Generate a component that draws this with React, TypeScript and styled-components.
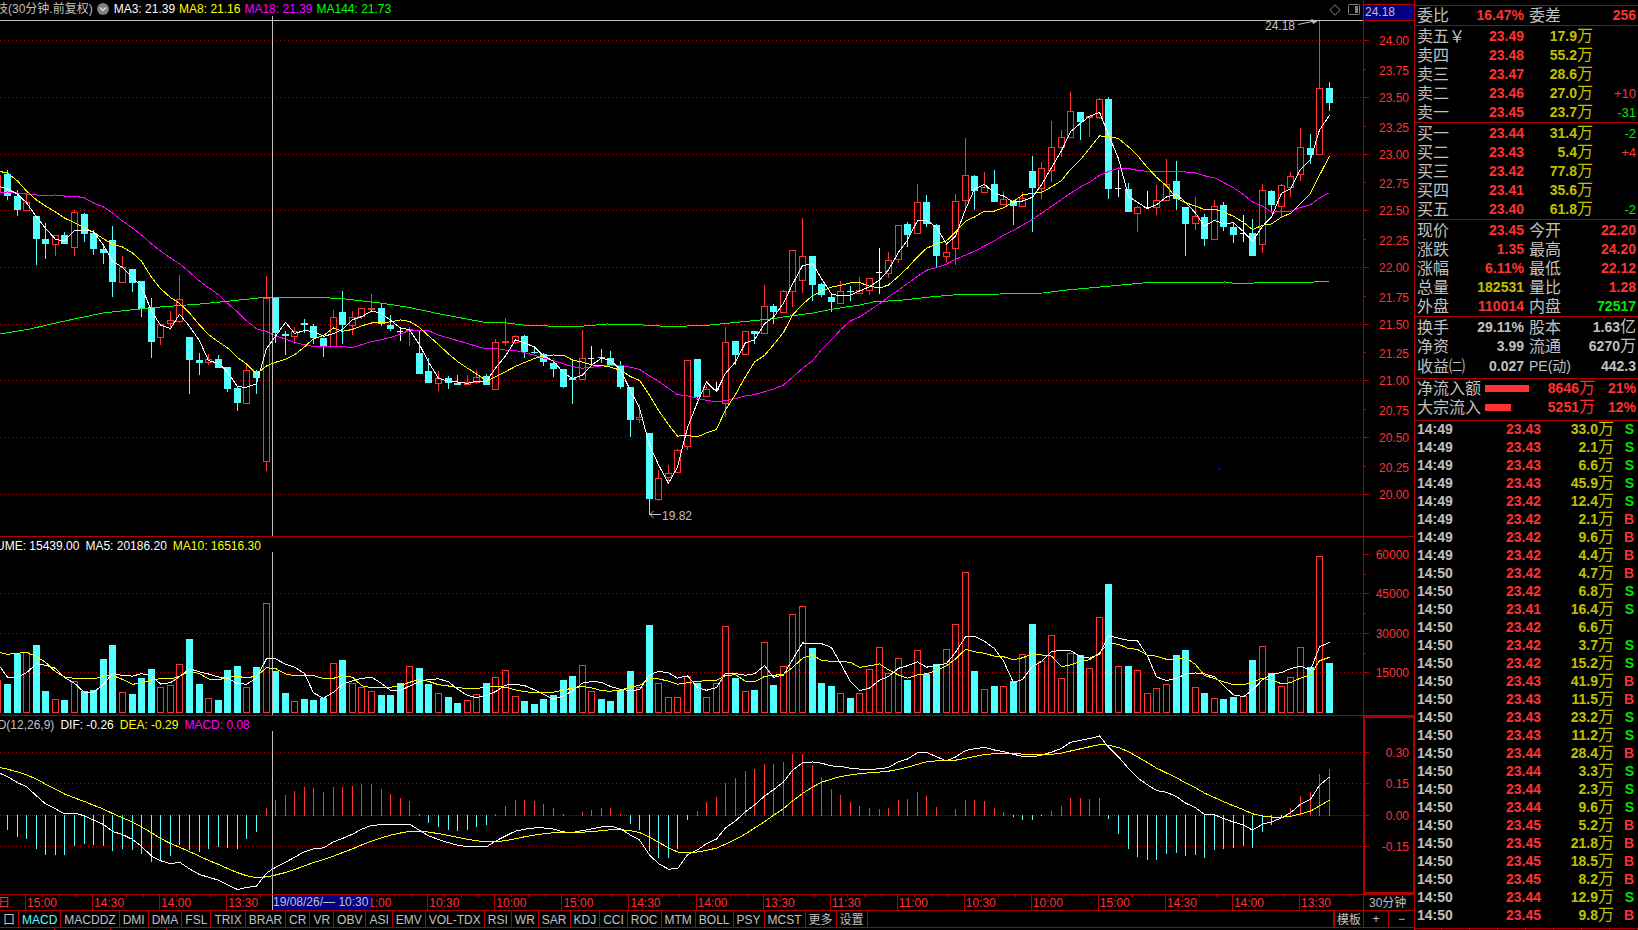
import React from 'react';
import styled, { createGlobalStyle } from 'styled-components';

const C = {
  line: '#b00000',
  red: '#ff3232',
  cyan: '#54ffff',
  grey: '#c0c0c0',
  yellow: '#ffff00',
  gold: '#c0c000',
  magenta: '#ff00ff',
  green: '#00ff00',
  lime: '#00e600',
  white: '#ffffff',
  navy: '#000080',
};

const SANS = '"Liberation Sans", "Noto Sans CJK SC", sans-serif';

const Global = createGlobalStyle`
  body { margin: 0; background: #000; color: ${C.grey}; font-family: ${SANS}; font-size: 12px; }
  * { box-sizing: border-box; }
`;

/* ---------- chart data ---------- */

type Kind = 'r' | 'c' | 'w';
/** kind, body top, body bottom, high, low */
type Candle = [Kind, number, number, number, number];

const LEAD: Candle = ['r', 175, 192, 175, 192];

const CANDLES: Candle[] = [
  ['c', 174, 196, 170, 200], ['c', 196, 210, 190, 216], ['r', 202, 211, 193, 211], ['c', 216, 239, 216, 265],
  ['c', 239, 244, 223, 259], ['r', 235, 245, 235, 256], ['c', 235, 244, 232, 244], ['r', 212, 248, 210, 256],
  ['c', 214, 234, 213, 242], ['c', 233, 249, 230, 255], ['c', 249, 253, 244, 264], ['c', 240, 282, 226, 297],
  ['r', 267, 283, 256, 283], ['c', 269, 283, 269, 292], ['c', 281, 309, 281, 317], ['c', 307, 342, 298, 358],
  ['r', 324, 338, 324, 345], ['r', 320, 324, 311, 330], ['r', 299, 322, 275, 323], ['c', 337, 360, 337, 394],
  ['c', 360, 363, 353, 375], ['r', 359, 363, 354, 365], ['c', 359, 368, 355, 368], ['c', 367, 389, 367, 392],
  ['c', 388, 403, 386, 411], ['r', 370, 404, 365, 404], ['c', 371, 378, 370, 394], ['r', 298, 462, 276, 471],
  ['c', 298, 333, 298, 343], ['c', 334, 336, 331, 355], ['r', 331, 337, 327, 344], ['c', 323, 325, 319, 333],
  ['c', 326, 338, 324, 344], ['c', 338, 346, 338, 357], ['r', 317, 347, 310, 347], ['c', 312, 325, 291, 344],
  ['r', 317, 326, 311, 335], ['r', 308, 317, 308, 319], ['r', 308, 310, 294, 311], ['c', 308, 324, 304, 326],
  ['c', 325, 329, 315, 331], ['w', 331, 332, 328, 341], ['r', 329, 331, 327, 346], ['c', 353, 374, 331, 374],
  ['c', 371, 383, 358, 383], ['r', 378, 384, 371, 391], ['c', 378, 383, 376, 389], ['c', 383, 385, 375, 385],
  ['r', 382, 385, 375, 385], ['r', 377, 383, 370, 384], ['c', 376, 385, 374, 385], ['r', 342, 390, 339, 390],
  ['r', 341, 343, 318, 346], ['r', 336, 343, 335, 344], ['c', 336, 352, 335, 358], ['c', 352, 353, 348, 354],
  ['c', 354, 362, 353, 366], ['c', 363, 369, 360, 377], ['c', 369, 387, 369, 388], ['c', 378, 380, 360, 404],
  ['r', 358, 380, 330, 380], ['w', 358, 359, 346, 366], ['c', 357, 358, 349, 363], ['c', 358, 365, 351, 365],
  ['c', 365, 387, 361, 389], ['c', 387, 420, 387, 437], ['r', 417, 420, 404, 423], ['c', 433, 499, 433, 515],
  ['r', 478, 500, 470, 501], ['r', 473, 478, 465, 481], ['r', 450, 473, 449, 473], ['r', 360, 447, 360, 450],
  ['c', 359, 397, 359, 400], ['r', 389, 397, 385, 397], ['w', 389, 390, 382, 392], ['r', 342, 404, 327, 417],
  ['c', 341, 355, 341, 365], ['r', 331, 355, 331, 355], ['c', 331, 334, 331, 344], ['r', 306, 334, 285, 334],
  ['c', 306, 312, 304, 324], ['r', 291, 313, 290, 313], ['r', 250, 292, 250, 307], ['r', 256, 281, 218, 293],
  ['c', 256, 285, 256, 301], ['c', 284, 295, 283, 297], ['c', 297, 302, 295, 312], ['r', 291, 304, 281, 304],
  ['c', 291, 292, 286, 301], ['r', 290, 294, 277, 294], ['r', 278, 291, 278, 295], ['w', 272, 273, 248, 294],
  ['r', 260, 274, 252, 278], ['r', 225, 260, 225, 263], ['c', 224, 235, 222, 247], ['r', 202, 234, 184, 234],
  ['c', 202, 224, 195, 227], ['c', 225, 256, 224, 268], ['r', 252, 257, 245, 263], ['r', 201, 249, 194, 265],
  ['r', 175, 201, 138, 210], ['c', 176, 191, 175, 210], ['r', 187, 193, 172, 193], ['c', 184, 202, 170, 202],
  ['r', 199, 205, 191, 205], ['c', 201, 206, 200, 225], ['r', 198, 207, 192, 207], ['c', 171, 188, 156, 232],
  ['r', 168, 189, 162, 199], ['r', 147, 171, 121, 182], ['r', 137, 148, 130, 157], ['r', 111, 138, 92, 138],
  ['c', 112, 122, 112, 140], ['r', 116, 118, 116, 137], ['r', 99, 118, 98, 119], ['c', 99, 189, 97, 199],
  ['w', 188, 189, 170, 197], ['c', 189, 212, 183, 212], ['r', 207, 214, 206, 232], ['w', 207, 208, 191, 209],
  ['r', 200, 208, 185, 215], ['r', 184, 201, 159, 201], ['c', 181, 199, 161, 210], ['c', 207, 224, 207, 256],
  ['r', 216, 224, 197, 230], ['c', 217, 239, 214, 246], ['r', 206, 240, 200, 240], ['c', 205, 227, 202, 231],
  ['c', 227, 235, 222, 243], ['w', 233, 234, 215, 242], ['c', 233, 256, 219, 256], ['r', 190, 245, 184, 253],
  ['c', 191, 205, 190, 212], ['r', 185, 207, 184, 217], ['r', 176, 188, 172, 197], ['r', 147, 175, 128, 181],
  ['c', 148, 155, 134, 164], ['r', 88, 155, 21, 155], ['c', 88, 103, 82, 111],
];

/* Volume and MACD levels are kept in thirds of a pixel below y = 530. */
const third = (v: number) => 530 + v / 3;

const VOLUMES = [
  462, 371, 367, 345, 483, 508, 510, 454, 483, 480, 387, 345, 487, 492, 444, 417, 471, 465, 402, 327,
  462, 504, 510, 420, 408, 471, 411, 219, 423, 489, 514, 507, 510, 504, 400, 390, 460, 472, 484, 495,
  495, 459, 409, 414, 462, 490, 501, 519, 511, 493, 459, 442, 421, 499, 513, 522, 507, 495, 450, 438,
  406, 484, 507, 513, 480, 423, 472, 285, 460, 502, 502, 439, 459, 502, 460, 289, 444, 484, 480, 337,
  465, 409, 253, 229, 354, 459, 468, 490, 504, 490, 418, 352, 430, 385, 450, 361, 432, 402, 358, 283,
  127, 423, 478, 468, 469, 454, 373, 282, 394, 316, 445, 370, 375, 415, 262, 162, 409, 408, 421, 490,
  475, 463, 375, 360, 472, 489, 505, 507, 501, 499, 390, 349, 430, 469, 442, 352, 411, 79, 399,
];

const ZERO = 856;
const MACD = [
  900, 921, 927, 957, 975, 975, 975, 948, 942, 945, 948, 963, 957, 960, 972, 996, 990, 978, 945, 960,
  966, 957, 951, 954, 957, 927, 906, 834, 810, 795, 783, 771, 774, 786, 771, 771, 768, 762, 762, 777,
  792, 804, 813, 852, 879, 891, 900, 903, 900, 891, 885, 852, 828, 810, 810, 813, 822, 834, 852, 856,
  846, 840, 834, 834, 852, 882, 900, 963, 984, 984, 957, 870, 843, 816, 801, 759, 744, 723, 717, 702,
  702, 696, 672, 672, 705, 741, 777, 795, 816, 828, 834, 837, 834, 810, 807, 786, 798, 831, 856, 837,
  810, 810, 813, 834, 846, 861, 870, 870, 858, 843, 828, 804, 804, 807, 804, 867, 912, 957, 981, 990,
  990, 972, 969, 978, 975, 984, 960, 957, 954, 948, 954, 906, 885, 860, 834, 798, 786, 732, 717,
];

const STEP = 9.578;
const column = (i: number) => Math.floor(7.5 + STEP * i);

const CLOSES = CANDLES.map(([kind, top, bottom]) => (kind === 'c' ? bottom : top));

/** Moving average; `lead` holds the values from bar -1 up to the first full window. */
function average(values: number[], period: number, lead: number[]): [number, number][] {
  const out: [number, number][] = lead.map((v, k) => [k - 1, v]);
  for (let i = period - 1; i < values.length; i += 1) {
    let sum = 0;
    for (let k = 0; k < period; k += 1) sum += values[i - k];
    out.push([i, sum / period]);
  }
  return out;
}

const path = (pts: [number, number][], y: (v: number) => number = (v) => v) =>
  pts.map(([i, v]) => `${column(i) + 0.5},${y(v).toFixed(1)}`).join(' ');

const MA3 = average(CLOSES, 3, [186, 189, 194]);
const MA8 = average(CLOSES, 8, [171, 173, 181, 191, 200, 206, 212, 218]);
const MA18 = average(CLOSES, 18, [
  193, 192, 193, 194, 195, 196, 195, 196, 196, 198, 203, 207, 213, 221, 228, 235, 244, 251,
]);
const MA144 =
  '0,334 30,329 60,322 103,313 130,310 160,307 200,304 230,301 258,298 285,297 315,297 345,299 380,303 407,307 440,314 483,322 507,323 523,325 573,327 607,324 643,325 660,326 687,326 710,325 740,322 770,319 790,316 813,313 833,309 860,305 873,302 903,300 930,297 953,295 1000,294 1043,293 1067,290 1100,287 1143,283 1225,282 1232,283 1254,283 1260,282 1314,282 1329,281';
const VMA5 = average(VOLUMES, 5, [400, 442, 442, 428, 401]);
const VMA10 = average(VOLUMES, 10, [366, 373, 370, 367, 380, 397, 425, 441, 445, 446]);

const DEA: [number, number][] = [[-1, 711]];
const DIF: [number, number][] = [[-1, 727]];
MACD.forEach((v, i) => {
  const dea = (i === 0 ? 712 : DEA[i][1]) + (v - ZERO) / 8 + 0.05;
  DEA.push([i, dea]);
  DIF.push([i, dea + (v - ZERO) / 2]);
});

/* ---------- chart parts ---------- */

const Screen = styled.div`
  display: flex;
  min-height: 100vh;
  overflow: hidden;
  background: #000;
`;

const Charts = styled.main`
  flex: 1;
  min-width: 0;
  display: flex;
  flex-direction: column;
`;

const Panel = styled.section`
  display: grid;
  grid-template-columns: minmax(0, 1fr) 51px;
  border-bottom: 1px solid ${C.line};
`;

const Plot = styled.div`
  min-width: 0;
  overflow: hidden;
`;

const Legend = styled.header<{ $height: number; $gap: number }>`
  display: flex;
  align-items: center;
  gap: ${(p) => p.$gap}px;
  height: ${(p) => p.$height}px;
  padding-top: 2px;
  line-height: 14px;
  white-space: nowrap;
`;

const Clipped = styled.span<{ $cut: number; $color?: string }>`
  margin-left: -${(p) => p.$cut}px;
  color: ${(p) => p.$color ?? C.grey};
`;

const Value = styled.span<{ $color: string }>`
  color: ${(p) => p.$color};
`;

const IconButton = styled.button`
  display: flex;
  padding: 0;
  border: 0;
  background: none;
  cursor: pointer;
`;

const MenuButton = styled(IconButton)`
  margin-right: 1px;
`;

const Tools = styled.div`
  display: flex;
  align-items: center;
  gap: 7px;
  margin: 2px 3px 0 auto;
`;

const Canvas = styled.svg<{ $height: number }>`
  display: block;
  width: 100%;
  height: ${(p) => p.$height}px;
`;

const AxisCanvas = styled.svg<{ $height: number }>`
  display: block;
  width: 51px;
  height: ${(p) => p.$height}px;
`;

const Curve = ({ points, color }: { points: string; color: string }) => (
  <polyline points={points} fill="none" stroke={color} strokeWidth={1} shapeRendering="crispEdges" />
);

const Grid = ({ rows, dash = '1 3' }: { rows: number[]; dash?: string }) => (
  <g stroke={C.line} strokeDasharray={dash} shapeRendering="crispEdges">
    {rows.map((y) => (
      <line key={y} x1={0} x2={1363} y1={y + 0.5} y2={y + 0.5} />
    ))}
  </g>
);

const Stick = ({ i, data }: { i: number; data: Candle }) => {
  const [kind, top, bottom, high, low] = data;
  const x = column(i);
  if (kind === 'r') {
    return (
      <g fill="none" stroke={C.red}>
        <path d={`M${x + 0.5} ${high}V${top}M${x + 0.5} ${bottom}V${low}`} />
        <rect x={x - 2.5} y={top + 0.5} width={6} height={Math.max(1, bottom - top - 1)} />
      </g>
    );
  }
  const color = kind === 'c' ? C.cyan : C.white;
  return (
    <g fill={color}>
      <rect x={x} y={high} width={1} height={low - high} />
      <rect x={x - 3} y={top} width={kind === 'c' ? 7 : 6} height={Math.max(1, bottom - top)} />
    </g>
  );
};

const VolumeBar = ({ i, top, down }: { i: number; top: number; down: boolean }) => {
  const x = column(i);
  const y = Math.round(third(top));
  return down ? (
    <rect x={x - 3} y={y} width={7} height={713 - y} fill={C.cyan} />
  ) : (
    <rect x={x - 2.5} y={y + 0.5} width={6} height={712 - y} fill="none" stroke={C.red} />
  );
};

const Crosshair = ({ from, to }: { from: number; to: number }) => (
  <rect x={272} y={from} width={1} height={to - from} fill={C.grey} />
);

type Mark = [number, string];

const AxisMarks = ({ ticks, minor, labels }: { ticks: number[]; minor: number[]; labels: Mark[] }) => (
  <>
    <path
      d={[...ticks.map((y) => `M1364 ${y + 0.5}h5`), ...minor.map((y) => `M1364 ${y + 0.5}h2`)].join('')}
      stroke={C.line}
      shapeRendering="crispEdges"
    />
    <g fill={C.red} fontFamily={SANS} fontSize={12} textAnchor="end">
      {labels.map(([y, text]) => (
        <text key={text} x={1409} y={y + 5}>
          {text}
        </text>
      ))}
    </g>
  </>
);

const PRICE_ROWS = [40, 97, 154, 210, 267, 324, 380, 437, 494];
const PRICE_LABELS: Mark[] = [
  [40, '24.00'], [70, '23.75'], [97, '23.50'], [127, '23.25'], [154, '23.00'], [183, '22.75'], [210, '22.50'],
  [240, '22.25'], [267, '22.00'], [297, '21.75'], [324, '21.50'], [353, '21.25'], [380, '21.00'], [410, '20.75'],
  [437, '20.50'], [467, '20.25'], [494, '20.00'],
];

const PricePanel = () => (
  <Panel>
    <Plot>
      <Legend $height={16} $gap={4}>
        <Clipped $cut={4}>技(30分钟.前复权)</Clipped>
        <MenuButton aria-label="指标菜单">
          <svg width="12" height="12" viewBox="0 0 12 12">
            <circle cx="6" cy="6" r="6" fill="#808080" />
            <path d="M3 4.5 6 7.5 9 4.5" fill="none" stroke="#ddd" strokeWidth="1.5" />
          </svg>
        </MenuButton>
        <Value $color={C.white}>MA3: 21.39</Value>
        <Value $color={C.yellow}>MA8: 21.16</Value>
        <Value $color={C.magenta}>MA18: 21.39</Value>
        <Value $color={C.green}>MA144: 21.73</Value>
        <Tools>
          <IconButton aria-label="标记">
            <svg width="12" height="12" viewBox="0 0 12 12">
              <path d="M6 .8 11.2 6 6 11.2 .8 6Z" fill="none" stroke="#808080" />
            </svg>
          </IconButton>
          <IconButton aria-label="侧栏">
            <svg width="12" height="12" viewBox="0 0 12 12">
              <rect x=".5" y=".5" width="11" height="10" rx="1" fill="none" stroke="#808080" />
              <rect x="7" y="2" width="3" height="7" fill="#808080" />
            </svg>
          </IconButton>
        </Tools>
      </Legend>
      <Canvas $height={520} viewBox="0 16 1363 520" preserveAspectRatio="xMaxYMin slice">
        <Grid rows={PRICE_ROWS} />
        <g shapeRendering="crispEdges">
          {[LEAD, ...CANDLES].map((data, k) => (
            <Stick key={k} i={k - 1} data={data} />
          ))}
        </g>
        <Curve points={MA144} color={C.green} />
        <Curve points={path(MA18)} color={C.magenta} />
        <Curve points={path(MA8)} color={C.yellow} />
        <Curve points={path(MA3)} color={C.white} />
        <rect x={0} y={20} width={1363} height={1} fill={C.grey} />
        <Crosshair from={16} to={536} />
        <rect x={1218} y={468} width={2} height={2} fill="#0000ff" />
        <g stroke={C.grey} fill="none">
          <path d="M650 514.5H661M653.5 511 650 514.5 653.5 518" />
          <path d="M1298 24.5 1317 20.5" />
          <path d="M1311 19 1318 21 1313 24Z" fill={C.grey} stroke="none" />
        </g>
        <g fill={C.grey} fontFamily={SANS} fontSize={12}>
          <text x={662} y={520}>19.82</text>
          <text x={1265} y={30}>24.18</text>
        </g>
      </Canvas>
    </Plot>
    <AxisCanvas $height={536} viewBox="1363 0 51 536">
      <g shapeRendering="crispEdges">
        <rect x={1364} y={5} width={50} height={15} fill={C.navy} />
        <path d="M1363.5 0V536M1364 4.5h50M1364 20.5h50" stroke={C.line} />
      </g>
      <AxisMarks
        ticks={PRICE_ROWS}
        minor={[69, 126, 182, 239, 296, 352, 409, 466]}
        labels={PRICE_LABELS}
      />
      <text x={1365} y={16} fill={C.grey} fontFamily={SANS} fontSize={12}>
        24.18
      </text>
    </AxisCanvas>
  </Panel>
);

const VolumePanel = () => (
  <Panel>
    <Plot>
      <Legend $height={15} $gap={6}>
        <Clipped $cut={28} $color={C.white}>VOLUME: 15439.00</Clipped>
        <Value $color={C.white}>MA5: 20186.20</Value>
        <Value $color={C.yellow}>MA10: 16516.30</Value>
      </Legend>
      <Canvas $height={163} viewBox="0 552 1363 163" preserveAspectRatio="xMaxYMin slice">
        <Grid rows={[593, 633, 672]} />
        <g shapeRendering="crispEdges">
          {[450, ...VOLUMES].map((top, k) => (
            <VolumeBar key={k} i={k - 1} top={top} down={k > 0 && (CANDLES[k - 1][0] === 'c' || k === 42)} />
          ))}
        </g>
        <Curve points={path(VMA5, third)} color={C.white} />
        <Curve points={path(VMA10, third)} color={C.yellow} />
        <Crosshair from={552} to={715} />
      </Canvas>
    </Plot>
    <AxisCanvas $height={178} viewBox="1363 537 51 178">
      <path d="M1363.5 537V715" stroke={C.line} shapeRendering="crispEdges" />
      <AxisMarks
        ticks={[554, 593, 633, 672]}
        minor={[574, 613, 653]}
        labels={[[554, '60000'], [593, '45000'], [633, '30000'], [672, '15000']]}
      />
    </AxisCanvas>
  </Panel>
);

const MacdPanel = () => (
  <Panel>
    <Plot>
      <Legend $height={15} $gap={6}>
        <Clipped $cut={29}>MACD(12,26,9)</Clipped>
        <Value $color={C.white}>DIF: -0.26</Value>
        <Value $color={C.yellow}>DEA: -0.29</Value>
        <Value $color={C.magenta}>MACD: 0.08</Value>
      </Legend>
      <Canvas $height={163} viewBox="0 731 1363 163" preserveAspectRatio="xMaxYMin slice">
        <Grid rows={[752, 783, 846]} />
        <Grid rows={[815]} dash="1 1" />
        <g shapeRendering="crispEdges">
          {MACD.map((v, i) => {
            const y = Math.round(third(v));
            return v === ZERO ? null : v > ZERO ? (
              <rect key={i} x={column(i)} y={815} width={1} height={Math.max(1, y - 815)} fill={C.cyan} />
            ) : (
              <rect key={i} x={column(i)} y={y} width={1} height={816 - y} fill={C.red} />
            );
          })}
        </g>
        <Curve points={path(DIF, third)} color={C.white} />
        <Curve points={path(DEA, third)} color={C.yellow} />
        <Crosshair from={731} to={894} />
      </Canvas>
    </Plot>
    <AxisCanvas $height={178} viewBox="1363 716 51 178">
      <rect x={1364} y={717} width={50} height={176} fill="none" stroke={C.line} strokeWidth={2} />
      <AxisMarks
        ticks={[752, 783, 815, 846]}
        minor={[768, 799, 831]}
        labels={[[752, '0.30'], [783, '0.15'], [815, '0.00'], [846, '-0.15']]}
      />
    </AxisCanvas>
  </Panel>
);

/* ---------- time axis and indicator tabs ---------- */

const TimeRow = styled.div`
  position: relative;
  display: grid;
  grid-template-columns: minmax(0, 1fr) 51px;
  height: 16px;
  border-bottom: 1px solid ${C.line};
  line-height: 16px;
`;

const Times = styled.div`
  display: grid;
  grid-template-columns: 25px repeat(19, minmax(0, 1fr)) 64px;
  color: ${C.red};
  line-height: 17px;
  overflow: hidden;
`;

const TimeCell = styled.span`
  position: relative;
  padding-left: 1px;
  border-left: 1px solid ${C.line};
  white-space: nowrap;
`;

const TimeStart = styled.span`
  margin-left: -2px;
`;

const Notches = styled.i`
  position: absolute;
  top: 0;
  left: 16px;
  width: 35px;
  height: 2px;
  background: repeating-linear-gradient(90deg, ${C.line} 0 1px, transparent 1px 17px);
`;

const DateFlag = styled.output`
  position: absolute;
  top: 0;
  left: 272px;
  width: 99px;
  height: 15px;
  border-left: 1px solid ${C.grey};
  background: ${C.navy};
  color: ${C.grey};
  line-height: 14px;
  white-space: nowrap;
  overflow: hidden;
`;

const Period = styled.span`
  padding-left: 5px;
  border-left: 1px solid ${C.line};
`;

const TabRow = styled.div`
  display: grid;
  grid-template-columns: minmax(0, 1fr) 51px;
  height: 17px;
  border-bottom: 1px solid ${C.line};
`;

const Tabs = styled.nav`
  display: flex;
  overflow: hidden;
`;

const Tab = styled.button<{ $active?: boolean }>`
  flex: none;
  padding: 2px 3px 0;
  border: 0;
  border-right: 1px solid ${C.line};
  background: none;
  color: ${(p) => (p.$active ? C.cyan : C.grey)};
  font: 12px/14px ${SANS};
  cursor: pointer;
`;

const Template = styled(Tab)`
  margin-left: auto;
  padding: 2px 2px 0;
  border-left: 2px solid ${C.line};
  border-right: 0;
`;

const Zoom = styled.div`
  display: grid;
  grid-template-columns: 1fr 1fr;
  border-left: 1px solid ${C.line};
`;

const ZoomButton = styled(Tab)`
  padding-top: 0;

  &:last-child {
    border-right: 0;
  }
`;

const Ruler = styled.div`
  height: 2px;
  margin-left: 54px;
  width: 113px;
  background: repeating-linear-gradient(90deg, ${C.line} 0 1px, transparent 1px 56px);
`;

/* The fifth mark carries no time: the date flag of the crosshair lies over it. */
const TIMES = [
  '15:00', '14:30', '14:00', '13:30', '', '11:00', '10:30', '10:00', '15:00', '14:30', '14:00', '13:30',
  '11:30', '11:00', '10:30', '10:00', '15:00', '14:30', '14:00', '13:30',
];

const INDICATORS = [
  '口', 'MACD', 'MACDDZ', 'DMI', 'DMA', 'FSL', 'TRIX', 'BRAR', 'CR', 'VR', 'OBV', 'ASI', 'EMV', 'VOL-TDX', 'RSI',
  'WR', 'SAR', 'KDJ', 'CCI', 'ROC', 'MTM', 'BOLL', 'PSY', 'MCST', '更多', '设置',
];

/* ---------- quote sidebar ---------- */

const Sidebar = styled.aside`
  flex: none;
  width: 224px;
  padding-top: 5px;
  border-left: 1px solid ${C.line};
`;

const Block = styled.table<{ $last?: boolean }>`
  width: 100%;
  table-layout: fixed;
  border-collapse: separate;
  border-spacing: 0;
  border-top: 1px solid ${C.line};
  border-bottom: ${(p) => (p.$last ? `1px solid ${C.line}` : '0')};
  padding: 0 2px;
`;

const Row = styled.tr<{ $height: number; $line?: number }>`
  height: ${(p) => p.$height}px;
  line-height: ${(p) => p.$line ?? p.$height}px;
`;

const Name = styled.th<{ $indent?: number }>`
  height: inherit;
  padding: 0 0 0 ${(p) => p.$indent ?? 0}px;
  font-size: 16px;
  font-weight: 400;
  line-height: inherit;
  text-align: left;
  white-space: nowrap;
`;

const Num = styled.td<{ $color: string; $light?: boolean }>`
  height: inherit;
  padding: 0;
  color: ${(p) => p.$color};
  font-size: ${(p) => (p.$light ? 13 : 14)}px;
  font-weight: ${(p) => (p.$light ? 400 : 700)};
  line-height: inherit;
  text-align: right;
  white-space: nowrap;
`;

const TapeNum = styled(Num)`
  vertical-align: top;
`;

const Time = styled(TapeNum)`
  text-align: left;
`;

const Side = styled(TapeNum)`
  padding-right: 2px;
`;

const UnitText = styled.span`
  font-size: 16px;
  font-weight: 400;
  line-height: 1px;
`;

const Latin = styled.span`
  font-size: 14px;
`;

const Gauge = styled.i`
  display: block;
  height: 7px;
  margin-left: 4px;
  background: ${C.red};
`;

const Filler = styled.tbody<{ $height: number }>`
  &::after {
    content: '';
    display: block;
    height: ${(p) => p.$height}px;
  }
`;

const SideRuler = styled.div`
  height: 2px;
  margin-left: 26px;
  background: repeating-linear-gradient(90deg, ${C.line} 0 1px, transparent 1px 28px);
`;

const Amount = ({ text }: { text: string }) => {
  const unit = /[万亿]$/.test(text) ? text.slice(-1) : '';
  return (
    <>
      {unit ? text.slice(0, -1) : text}
      {unit && <UnitText>{unit}</UnitText>}
    </>
  );
};

const Cols = ({ widths }: { widths: (number | undefined)[] }) => (
  <colgroup>
    {widths.map((w, i) => (
      <col key={i} width={w} />
    ))}
  </colgroup>
);

const ASKS = [
  ['卖五￥', '23.49', '17.9万', ''],
  ['卖四', '23.48', '55.2万', ''],
  ['卖三', '23.47', '28.6万', ''],
  ['卖二', '23.46', '27.0万', '+10'],
  ['卖一', '23.45', '23.7万', '-31'],
];

const BIDS = [
  ['买一', '23.44', '31.4万', '-2'],
  ['买二', '23.43', '5.4万', '+4'],
  ['买三', '23.42', '77.8万', ''],
  ['买四', '23.41', '35.6万', ''],
  ['买五', '23.40', '61.8万', '-2'],
];

const Orders = ({ rows }: { rows: string[][] }) => (
  <Block>
    <Cols widths={[48, 59, 69, undefined]} />
    <Filler $height={1} />
    <tbody>
      {rows.map(([name, price, amount, delta]) => (
        <Row key={name} $height={19}>
          <Name scope="row">{name}</Name>
          <Num $color={C.red}>{price}</Num>
          <Num $color={C.gold}>
            <Amount text={amount} />
          </Num>
          <Num $light $color={delta.startsWith('+') ? C.red : C.lime}>{delta}</Num>
        </Row>
      ))}
    </tbody>
  </Block>
);

type Pair = [React.ReactNode, string, string, React.ReactNode, string, string];

const Pairs = ({ rows, before = 0, after = 0 }: { rows: Pair[]; before?: number; after?: number }) => (
  <Block>
    <Cols widths={[48, 59, 54, undefined]} />
    {before > 0 && <Filler $height={before} />}
    <tbody>
      {rows.map(([a, av, ac, b, bv, bc]) => (
        <Row key={av} $height={19}>
          <Name scope="row">{a}</Name>
          <Num $color={ac}>{av}</Num>
          <Name scope="row" $indent={5}>{b}</Name>
          <Num $color={bc}>
            <Amount text={bv} />
          </Num>
        </Row>
      ))}
    </tbody>
    {after > 0 && <Filler $height={after} />}
  </Block>
);

const FLOWS: [string, number, string, string][] = [
  ['净流入额', 44, '8646万', '21%'],
  ['大宗流入', 26, '5251万', '12%'],
];

const TICKS = `14:49 23.43 33.0 S|14:49 23.43 2.1 S|14:49 23.43 6.6 S|14:49 23.43 45.9 S|14:49 23.42 12.4 S|14:49 23.42 2.1 B|14:49 23.42 9.6 B|14:49 23.42 4.4 B|14:50 23.42 4.7 B|14:50 23.42 6.8 S|14:50 23.41 16.4 S|14:50 23.42 6.6 |14:50 23.42 3.7 S|14:50 23.42 15.2 S|14:50 23.43 41.9 B|14:50 23.43 11.5 B|14:50 23.43 23.2 S|14:50 23.43 11.2 S|14:50 23.44 28.4 B|14:50 23.44 3.3 S|14:50 23.44 2.3 S|14:50 23.44 9.6 S|14:50 23.45 5.2 B|14:50 23.45 21.8 B|14:50 23.45 18.5 B|14:50 23.45 8.2 B|14:50 23.44 12.9 S|14:50 23.45 9.8 B`
  .split('|')
  .map((row) => row.split(' '));

const Quotes = () => (
  <Sidebar>
    <Pairs rows={[['委比', '16.47%', C.red, '委差', '256', C.red]]} />
    <Orders rows={ASKS} />
    <Orders rows={BIDS} />
    <Pairs
      before={1}
      rows={[
        ['现价', '23.45', C.red, '今开', '22.20', C.red],
        ['涨跌', '1.35', C.red, '最高', '24.20', C.red],
        ['涨幅', '6.11%', C.red, '最低', '22.12', C.red],
        ['总量', '182531', C.gold, '量比', '1.28', C.red],
        ['外盘', '110014', C.red, '内盘', '72517', C.lime],
      ]}
    />
    <Pairs
      before={1}
      after={2}
      rows={[
        ['换手', '29.11%', C.grey, '股本', '1.63亿', C.grey],
        ['净资', '3.99', C.grey, '流通', '6270万', C.grey],
        ['收益㈡', '0.027', C.grey, <Latin>PE(动)</Latin>, '442.3', C.grey],
      ]}
    />
    <Block>
      <Cols widths={[64, 50, 64, undefined]} />
      <tbody>
        {FLOWS.map(([name, width, amount, share]) => (
          <Row key={name} $height={19}>
            <Name scope="row">{name}</Name>
            <Num $color={C.red}>
              <Gauge style={{ width }} />
            </Num>
            <Num $color={C.red}>
              <Amount text={amount} />
            </Num>
            <Num $color={C.red}>{share}</Num>
          </Row>
        ))}
      </tbody>
      <Filler $height={3} />
    </Block>
    <Block $last>
      <Cols widths={[60, 64, 73, undefined]} />
      <tbody>
        {TICKS.map(([time, price, amount, side], i) => (
          <Row key={i} $height={18} $line={16}>
            <Time $color={C.grey}>{time}</Time>
            <TapeNum $color={C.red}>{price}</TapeNum>
            <TapeNum $color={C.gold}>
              <Amount text={`${amount}万`} />
            </TapeNum>
            <Side $color={side === 'B' ? C.red : C.lime}>{side}</Side>
          </Row>
        ))}
      </tbody>
      <Filler $height={3} />
    </Block>
    <SideRuler />
  </Sidebar>
);

export default function App() {
  return (
    <>
      <Global />
      <Screen>
        <Charts>
          <PricePanel />
          <VolumePanel />
          <MacdPanel />
          <TimeRow>
            <Times>
              <TimeStart>日</TimeStart>
              {TIMES.map((t, i) => (
                <TimeCell key={i}>
                  {t}
                  <Notches />
                </TimeCell>
              ))}
            </Times>
            <Period>30分钟</Period>
            <DateFlag>19/08/26/— 10:30</DateFlag>
          </TimeRow>
          <TabRow>
            <Tabs>
              {INDICATORS.map((name) => (
                <Tab key={name} $active={name === 'MACD'}>
                  {name}
                </Tab>
              ))}
              <Template>模板</Template>
            </Tabs>
            <Zoom>
              <ZoomButton>+</ZoomButton>
              <ZoomButton>−</ZoomButton>
            </Zoom>
          </TabRow>
          <Ruler />
        </Charts>
        <Quotes />
      </Screen>
    </>
  );
}
